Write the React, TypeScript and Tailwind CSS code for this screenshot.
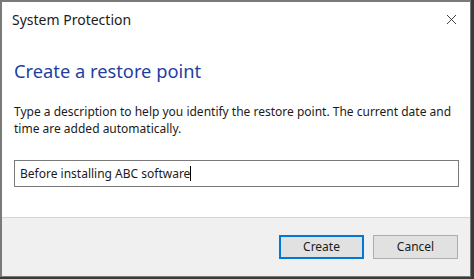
import { X } from "lucide-react"

export default function App() {
  return (
    <div className="w-[474px] h-[279px] bg-[#3a3a3a] overflow-hidden" style={{ fontFamily: '"Noto Sans", "Open Sans", sans-serif' }}>
      <div className="w-[471px] h-[277px] bg-white border-t-2 border-l-2 border-r border-b border-[#7a7a7a] flex flex-col">
        <div className="h-[35px] flex items-center justify-between pl-[10px] pr-[10px]">
          <span className="text-[14px] text-[#1b1b1b]">System Protection</span>
          <X size={17} strokeWidth={1.2} className="text-[#222]" />
        </div>
        <div className="flex-1 px-[12px]">
          <h1 className="text-[18.3px] leading-[26px] text-[#1f3f9f] mt-[21px]">Create a restore point</h1>
          <p className="text-[12px] leading-[17px] text-[#1b1b1b] mt-[19px]">
            Type a description to help you identify the restore point. The current date and time are added automatically.
          </p>
          <div className="mt-[23px] w-[445px] h-[27px] border border-[#7a7a7a] flex items-center px-[5px] text-[12px] text-[#1b1b1b]">
            Before installing ABC software
            <span className="w-px h-[15px] bg-black" />
          </div>
        </div>
        <div className="h-[59px] bg-[#f0f0f0] border-t border-[#d4d4d4] flex items-start justify-end gap-[9px] pt-[17px] pr-[12px]">
          <button className="w-[85px] h-[24px] bg-[#e1e1e1] border-2 border-[#0078d7] text-[12px] text-[#1b1b1b]">Create</button>
          <button className="w-[85px] h-[24px] bg-[#e1e1e1] border border-[#adadad] text-[12px] text-[#1b1b1b]">Cancel</button>
        </div>
      </div>
    </div>
  )
}
